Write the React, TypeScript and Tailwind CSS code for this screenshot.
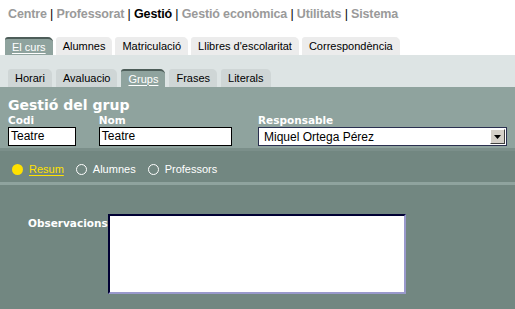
import { useState } from "react";

const mainTabs = ["El curs", "Alumnes", "Matriculació", "Llibres d'escolaritat", "Correspondència"];
const subTabs = ["Horari", "Avaluacio", "Grups", "Frases", "Literals"];

function Tab({ label, active, dark }: { label: string; active: boolean; dark?: boolean }) {
  return (
    <div
      className={
        "h-[18px] px-[7px] flex items-center rounded-tr-[5px] rounded-tl-[3px] text-[11px] leading-none " +
        (active
          ? "bg-[#8fa39e] text-white border-t-2 border-[#4d5d59]"
          : dark
          ? "bg-[#cfd6d6] text-black"
          : "bg-[#ececec] text-black")
      }
    >
      <span className={active ? "underline underline-offset-2 decoration-1" : ""}>{label}</span>
    </div>
  );
}

export default function App() {
  const [opcio, setOpcio] = useState("Resum");
  const nav = ["Centre", "Professorat", "Gestió", "Gestió econòmica", "Utilitats", "Sistema"];

  return (
    <div className="w-[515px] h-[309px] bg-white flex flex-col" style={{ fontFamily: "'Liberation Sans', Arial, sans-serif" }}>
      {/* menu superior */}
      <div className="h-[37px] pl-2 pt-[5px] text-[12.5px] font-bold text-[#9a9a9a] tracking-[-0.15px]">
        {nav.map((n, i) => (
          <span key={n}>
            <span className={n === "Gestió" ? "text-black" : ""}>{n}</span>
            {i < nav.length - 1 && <span className="text-black font-normal"> | </span>}
          </span>
        ))}
      </div>

      <div className="flex gap-[3px] pl-[5px] items-end h-[18px]">
        {mainTabs.map((t) => (
          <Tab key={t} label={t} active={t === "El curs"} />
        ))}
      </div>

      <div className="h-[32px] bg-[#dde4e4] flex items-end gap-[4px] pl-[8px]">
        {subTabs.map((t) => (
          <Tab key={t} label={t} active={t === "Grups"} dark />
        ))}
      </div>

      {/* capçalera del grup */}
      <div className="bg-[#8fa39e] h-[61px] px-2 pt-[11px] text-white" style={{ fontFamily: "'DejaVu Sans', Verdana, sans-serif" }}>
        <div className="text-[14px] font-bold leading-[15px]">Gestió del grup</div>
        <div className="flex mt-[1px]">
          <div className="w-[93px]">
            <div className="text-[10.5px] font-bold leading-[13px]">Codi</div>
            <div className="w-[68px] h-[19px] bg-white border border-black text-black text-[12px] pl-[2px] leading-[17px]" style={{ fontFamily: "'Liberation Sans', Arial, sans-serif" }}>
              Teatre
            </div>
          </div>
          <div className="w-[163px]">
            <div className="text-[10.5px] font-bold leading-[13px]">Nom</div>
            <div className="w-[133px] h-[19px] bg-white border border-black text-black text-[12px] pl-[2px] leading-[17px]" style={{ fontFamily: "'Liberation Sans', Arial, sans-serif" }}>
              Teatre
            </div>
          </div>
          <div>
            <div className="text-[10.5px] font-bold leading-[13px]">Responsable</div>
            <div className="w-[249px] h-[19px] bg-white border border-[#2a3050] flex items-center text-black text-[12px] pl-[5px]" style={{ fontFamily: "'Liberation Sans', Arial, sans-serif" }}>
              <span className="flex-1">Miquel Ortega Pérez</span>
              <span className="w-[15px] h-[15px] mr-[1px] bg-[#d4d0c8] border border-t-white border-l-white border-r-[#404040] border-b-[#404040] flex items-center justify-center">
                <svg width="7" height="4" viewBox="0 0 7 4">
                  <path d="M0 0h7L3.5 4z" fill="#000" />
                </svg>
              </span>
            </div>
          </div>
        </div>
      </div>

      <div className="h-[3px] bg-[#7b8f8a]" />

      {/* opcions */}
      <div className="h-[31px] bg-[#728781] flex items-center pt-[6px] pl-[12px] text-[11px] text-white">
        {["Resum", "Alumnes", "Professors"].map((o) => (
          <button key={o} onClick={() => setOpcio(o)} className="flex items-center gap-[6px] mr-[12px]">
            {opcio === o ? (
              <span className="w-[11px] h-[11px] rounded-full bg-[#ffe100]" />
            ) : (
              <span className="w-[11px] h-[11px] rounded-full border border-white" />
            )}
            <span className={opcio === o ? "text-[#ffe100] underline underline-offset-2" : ""}>{o}</span>
          </button>
        ))}
      </div>

      <div className="h-[3px] bg-[#8fa39e]" />

      {/* observacions */}
      <div className="flex-1 bg-[#728781] flex pt-[29px] pl-[28px]">
        <div className="text-white text-[10.5px] font-bold w-[80px] pt-[2px]" style={{ fontFamily: "'DejaVu Sans', Verdana, sans-serif" }}>
          Observacions
        </div>
        <textarea className="w-[298px] h-[80px] bg-white border-2 border-t-[#000033] border-l-[#000033] border-r-[#9999cc] border-b-[#9999cc] resize-none outline-none" />
      </div>
    </div>
  );
}
